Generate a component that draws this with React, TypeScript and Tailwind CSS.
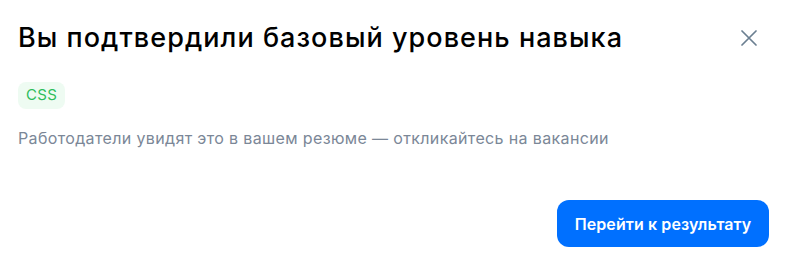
import React from "react";

export default function App() {
	return (
		<div className="w-[785px] h-[264px] bg-white font-['Inter',sans-serif]">
			<div className="flex flex-col h-full pl-[18px] pr-[16px] pt-[21px] pb-[17px]">
				<div className="flex items-start justify-between">
					<h1 className="text-[27px] leading-[34px] font-medium text-black tracking-[1.05px]">
						Вы подтвердили базовый уровень навыка
					</h1>
					{/* close */}
					<button className="mt-[9px] mr-[12px] text-[#6b7f91]">
						<svg width="16" height="16" viewBox="0 0 16 16" fill="none" stroke="currentColor" strokeWidth="1.7" strokeLinecap="round">
							<path d="M1 1L15 15M15 1L1 15" />
						</svg>
					</button>
				</div>
				<div className="mt-[27px]">
					<span className="inline-flex items-center h-[27px] px-[8px] rounded-[8px] bg-[#eefbf2] text-[#2ebd5c] text-[15px] tracking-[0.3px]">
						CSS
					</span>
				</div>
				<p className="mt-[19px] text-[16px] leading-[20px] text-[#7b8797] tracking-[0.36px]">
					Работодатели увидят это в вашем резюме — откликайтесь на вакансии
				</p>
				<div className="mt-auto flex justify-end">
					<button className="h-[47px] w-[212px] rounded-[12px] bg-[#0070ff] text-white text-[16px] font-semibold tracking-[0.1px]">
						Перейти к результату
					</button>
				</div>
			</div>
		</div>
	);
}
